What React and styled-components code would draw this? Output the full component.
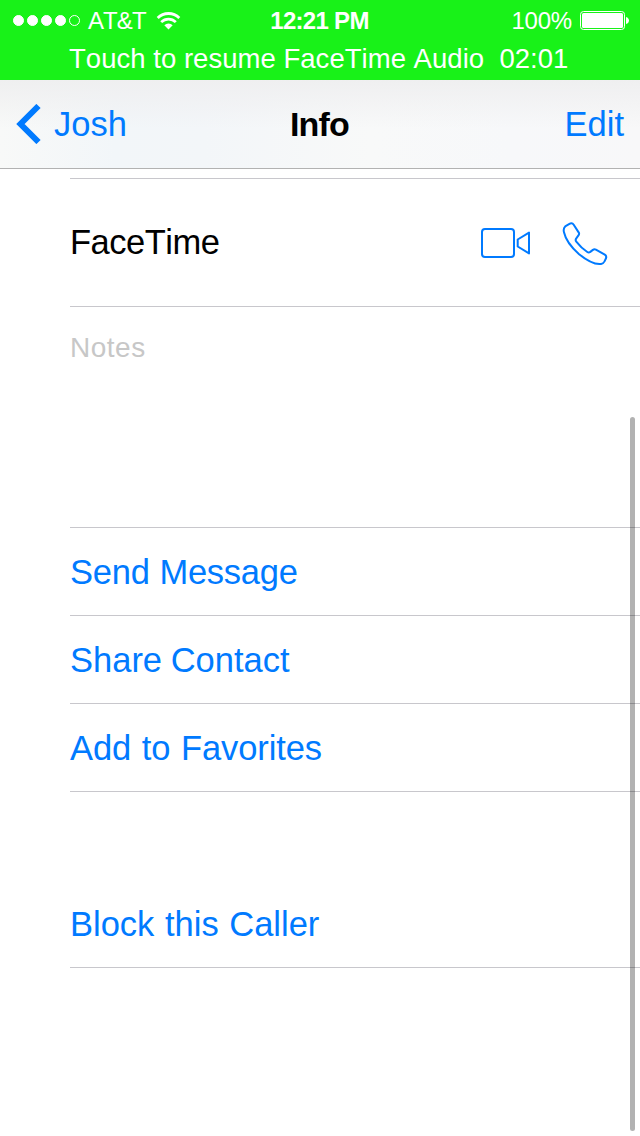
import React from 'react';
import styled, { createGlobalStyle } from 'styled-components';

const BLUE = '#007aff';

const GlobalStyle = createGlobalStyle`
  * { box-sizing: border-box; }
  body {
    margin: 0;
    background: #fff;
    font-family: "Liberation Sans", Arial, sans-serif;
    font-kerning: none;
  }
`;

const Screen = styled.div`
  position: relative;
  width: 640px;
  height: 1136px;
  overflow: hidden;
  background: #fff;
`;

const CallHeader = styled.header`
  height: 80px;
  background: #18f218;
  color: #fff;
`;

const StatusBar = styled.div`
  display: grid;
  grid-template-columns: 1fr auto 1fr;
  align-items: center;
  height: 41px;
  padding: 0 11px 0 13px;
  font-size: 24px;
  line-height: 41px;
  white-space: nowrap;
`;

const StatusLeft = styled.div`
  display: flex;
  align-items: center;
`;

const StatusRight = styled.div`
  display: flex;
  align-items: center;
  justify-content: flex-end;
  gap: 8px;
`;

const SignalDots = styled.div`
  display: flex;
  gap: 3px;
  margin-right: 8px;
`;

const Dot = styled.span`
  width: 11px;
  height: 11px;
  border: 1px solid #fff;
  border-radius: 50%;
  background: ${(p) => (p.$filled ? '#fff' : 'transparent')};
`;

const Label = styled.span`
  letter-spacing: ${(p) => p.$spacing || 0}px;
  word-spacing: ${(p) => p.$words || 0}px;
  white-space: pre;
`;

const Clock = styled(Label)`
  margin-right: 3px;
  font-weight: 700;
`;

const WifiIcon = styled.svg`
  margin-left: 10px;
`;

const ResumeBanner = styled.div`
  height: 39px;
  padding-left: 69px;
  font-size: 27.5px;
  line-height: 36px;
`;

const NavBar = styled.nav`
  display: grid;
  grid-template-columns: 1fr auto 1fr;
  align-items: center;
  height: 89px;
  padding: 0 16px;
  border-bottom: 1px solid #b2b2b2;
  background:
    linear-gradient(180deg, rgba(239, 239, 240, 1), rgba(239, 239, 240, 0) 55%),
    linear-gradient(90deg, #f8f9f8 0, #f2f6f9 18%, #f3f6f9 32%, #f8f9f9 58%, #f7f8fa 80%, #f8f8f9 100%);
  font-size: 34.5px;
  line-height: 88px;
`;

const NavButton = styled.button`
  display: flex;
  align-items: center;
  justify-self: ${(p) => (p.$end ? 'end' : 'start')};
  gap: 13px;
  padding: 0;
  border: 0;
  background: none;
  color: ${BLUE};
  font: inherit;
`;

const Title = styled.h1`
  margin: 0 1px 0 0;
  font-size: 34px;
  font-weight: 700;
  letter-spacing: -0.8px;
`;

const Content = styled.main`
  padding: 9px 0 0 70px;
`;

const FaceTimeRow = styled.div`
  display: flex;
  align-items: center;
  justify-content: space-between;
  height: 129px;
  padding-right: 32px;
  border: solid #c8c7cc;
  border-width: 1px 0;
  color: #000;
  font-size: 34.5px;
`;

const Actions = styled.div`
  display: flex;
  align-items: center;
  gap: 31px;
`;

const Notes = styled.div`
  height: 221px;
  padding-top: 25px;
  border-bottom: 1px solid #c8c7cc;
  color: #c7c7c7;
  font-size: 28px;
  line-height: 32px;
`;

const ActionRow = styled.div`
  height: 88px;
  margin-top: ${(p) => (p.$separated ? 88 : 0)}px;
  border-bottom: 1px solid #c8c7cc;
  color: ${BLUE};
  font-size: 34.5px;
  line-height: 88px;
`;

const ScrollIndicator = styled.div`
  position: absolute;
  top: 417px;
  right: 5px;
  width: 5px;
  height: 714px;
  border-radius: 3px;
  background: rgba(0, 0, 0, 0.3);
`;

const Wifi = () => (
  <WifiIcon width="25" height="18" viewBox="0 0 26 19" fill="none" stroke="#fff">
    <path d="M1.6 6.3a16.2 16.2 0 0 1 22.8 0" strokeWidth="3" />
    <path d="M5.3 10.7a11 11 0 0 1 15.4 0" strokeWidth="2.9" />
    <path d="M8.6 14a6.3 6.3 0 0 1 8.800 0L13 18.600z" fill="#fff" stroke="none" />
  </WifiIcon>
);

const Battery = () => (
  <svg width="49" height="19" viewBox="0 0 49 19">
    <rect x="0.5" y="0.5" width="44" height="18" rx="3" fill="none" stroke="#fff" />
    <rect x="2" y="2" width="41" height="15" rx="1.5" fill="#fff" />
    <path d="M46 6c4 1 4 6 0 7z" fill="#fff" />
  </svg>
);

const BackChevron = () => (
  <svg width="25" height="40" viewBox="0 0 25 40" fill="none" stroke={BLUE} strokeWidth="6">
    <path d="M22.5 2 4.5 20l18 18" />
  </svg>
);

const VideoIcon = () => (
  <svg width="51" height="44" viewBox="0 0 51 44" fill="none" stroke={BLUE} strokeWidth="2" strokeLinejoin="round">
    <rect x="2" y="8" width="32" height="28" rx="3" />
    <path d="M37.7 18.5 49 11.6v20.8l-11.3-6.9z" />
  </svg>
);

const PhoneIcon = () => (
  <svg width="46" height="44" viewBox="0 0 46 44" fill="none" stroke={BLUE} strokeWidth="2" strokeLinejoin="round">
    <path d="M3.2 5.4 7 3.1c1.9-1.1 3.8-.8 4.7.6l5.1 7.900c.6 1 .4 1.700-.2 2.600l-2.500 3.400c-.7 1.100-.6 2 .2 3 3.100 4 6.800 7.600 11 10.400 1 .7 2 .6 3-.1l2.600-2c1-.7 2-.7 3-.2l8.900 5c1.500.9 1.800 2 1.200 3.600l-1.500 3.100c-.8 1.500-1.800 2.300-3.400 2.500-5.600.7-13.300-2.600-22-9.700C8.900 26 3.700 19.200 1.900 11c-.5-2.400-.2-4.200 1.300-5.600z" />
  </svg>
);

const actions = [
  { text: 'Send Message', spacing: -0.25, words: 0.5 },
  { text: 'Share Contact', spacing: 0, words: -1 },
  { text: 'Add to Favorites', spacing: -0.12, words: 1.3 },
  { text: 'Block this Caller', spacing: 0, words: 1, separated: true },
];

export default function App() {
  return (
    <Screen>
      <GlobalStyle />
      <CallHeader>
        <StatusBar>
          <StatusLeft>
            <SignalDots>
              {[true, true, true, true, false].map((filled, i) => (
                <Dot key={i} $filled={filled} />
              ))}
            </SignalDots>
            <Label $spacing={-0.9}>AT&amp;T</Label>
            <Wifi />
          </StatusLeft>
          <Clock $spacing={-0.7}>12:21 PM</Clock>
          <StatusRight>
            <Label $spacing={-0.2}>100%</Label>
            <Battery />
          </StatusRight>
        </StatusBar>
        <ResumeBanner>
          <Label $spacing={0.03}>{'Touch to resume FaceTime Audio  02:01'}</Label>
        </ResumeBanner>
      </CallHeader>
      <NavBar>
        <NavButton>
          <BackChevron />
          <Label>Josh</Label>
        </NavButton>
        <Title>Info</Title>
        <NavButton $end>
          <Label>Edit</Label>
        </NavButton>
      </NavBar>
      <Content>
        <FaceTimeRow>
          <Label $spacing={-0.5}>FaceTime</Label>
          <Actions>
            <VideoIcon />
            <PhoneIcon />
          </Actions>
        </FaceTimeRow>
        <Notes>
          <Label $spacing={0.5}>Notes</Label>
        </Notes>
        {actions.map((a) => (
          <ActionRow key={a.text} $separated={a.separated}>
            <Label $spacing={a.spacing} $words={a.words}>{a.text}</Label>
          </ActionRow>
        ))}
      </Content>
      <ScrollIndicator />
    </Screen>
  );
}
